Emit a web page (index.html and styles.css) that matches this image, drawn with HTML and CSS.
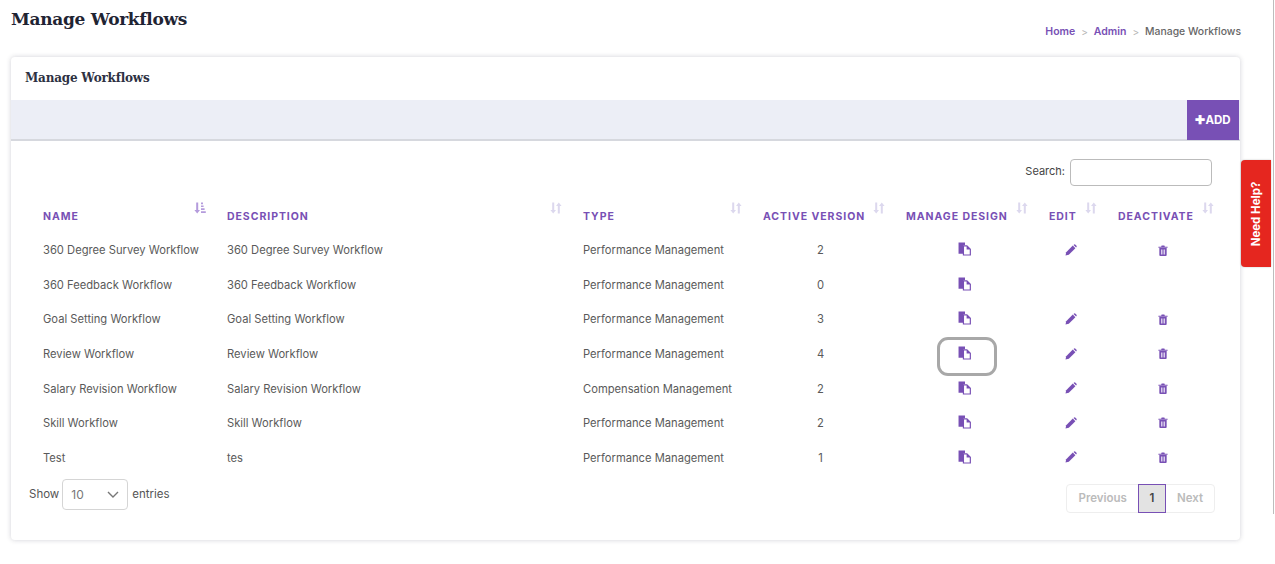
FILE: index.html
```html
<!DOCTYPE html>
<html lang="en">
<head>
<meta charset="utf-8">
<title>Manage Workflows</title>
<link rel="stylesheet" href="styles.css">
</head>
<body>
<svg class="defs" width="0" height="0" aria-hidden="true">
  <defs>
    <symbol id="i-copy" viewBox="0 0 13 13">
      <path d="M0.5 0.5H6.5V3H5V11H0.5Z" fill="#7850b5"/>
      <path d="M4.5 3H8.5L12 6.5V12.5H4.5Z" fill="#7850b5"/>
      <path d="M5.6 4.1H8V7H10.9V11.5H5.6Z" fill="#fff"/>
    </symbol>
    <symbol id="i-edit" viewBox="0 0 12 12">
      <path d="M0.5 11.5L1.2 8.2L7.8 1.6L10.4 4.2L3.8 10.8Z" fill="#7850b5"/>
      <path d="M8.5 0.9L9.2 0.4Q9.7 0.1 10.2 0.5L11.5 1.8Q11.9 2.3 11.6 2.8L11.1 3.5Z" fill="#7850b5"/>
    </symbol>
    <symbol id="i-trash" viewBox="0 0 10 12">
      <path d="M0 1.8H3L3.5 0.5H6.5L7 1.8H10V3H0Z" fill="#7850b5"/>
      <path d="M1 3.4H9V11Q9 12 8 12H2Q1 12 1 11Z" fill="#7850b5"/>
      <path d="M2.8 5H3.8V10.4H2.8ZM4.5 5H5.5V10.4H4.5ZM6.2 5H7.2V10.4H6.2Z" fill="#e4dcf2"/>
    </symbol>
    <symbol id="i-sort" viewBox="0 0 12 12">
      <path d="M2.2 0.5H4.2V8H6L3.2 11.5L0.4 8H2.2Z" fill="#dcd8ee"/>
      <path d="M7.8 11.5H9.8V4H11.6L8.8 0.5L6 4H7.8Z" fill="#dcd8ee"/>
    </symbol>
    <symbol id="i-sort-asc" viewBox="0 0 12 12">
      <path d="M2.2 0.5H4.2V8H6L3.2 11.5L0.4 8H2.2Z" fill="#b49bdc"/>
      <path d="M7 0.5H9V2.2H7ZM7 3.4H9.6V5.1H7ZM7 6.3H10.6V8H7ZM7 9.2H11.8V11H7Z" fill="#b49bdc"/>
    </symbol>
  </defs>
</svg>

<div class="page">
  <header class="page-head">
    <h1 class="page-title">Manage Workflows</h1>
    <nav class="crumbs">
      <a class="crumb-link">Home</a><span class="crumb-sep">&gt;</span>
      <a class="crumb-link">Admin</a><span class="crumb-sep">&gt;</span>
      <span class="crumb-current">Manage Workflows</span>
    </nav>
  </header>

  <section class="card">
    <h2 class="card-title">Manage Workflows</h2>
    <div class="toolbar">
      <button class="add-btn" type="button"><span class="add-plus">✚</span>ADD</button>
    </div>
    <div class="card-body">
      <div class="search-row">
        <label class="search-label" for="s">Search:</label>
        <input class="search-input" id="s" type="text">
      </div>
      <table class="grid">
        <colgroup>
          <col class="c1"><col class="c2"><col class="c3"><col class="c4"><col class="c5"><col class="c6"><col class="c7">
        </colgroup>
        <thead>
          <tr>
            <th>NAME<svg class="sort"><use href="#i-sort-asc"/></svg></th>
            <th>DESCRIPTION<svg class="sort"><use href="#i-sort"/></svg></th>
            <th>TYPE<svg class="sort"><use href="#i-sort"/></svg></th>
            <th>ACTIVE VERSION<svg class="sort"><use href="#i-sort"/></svg></th>
            <th>MANAGE DESIGN<svg class="sort"><use href="#i-sort"/></svg></th>
            <th>EDIT<svg class="sort"><use href="#i-sort"/></svg></th>
            <th>DEACTIVATE<svg class="sort"><use href="#i-sort"/></svg></th>
          </tr>
        </thead>
        <tbody>
          <tr><td>360 Degree Survey Workflow</td><td>360 Degree Survey Workflow</td><td>Performance Management</td><td class="mid">2</td><td class="mid"><svg class="ic-copy"><use href="#i-copy"/></svg></td><td class="mid"><svg class="ic-edit"><use href="#i-edit"/></svg></td><td class="mid"><svg class="ic-trash"><use href="#i-trash"/></svg></td></tr>
          <tr><td>360 Feedback Workflow</td><td>360 Feedback Workflow</td><td>Performance Management</td><td class="mid">0</td><td class="mid"><svg class="ic-copy"><use href="#i-copy"/></svg></td><td class="mid"></td><td class="mid"></td></tr>
          <tr><td>Goal Setting Workflow</td><td>Goal Setting Workflow</td><td>Performance Management</td><td class="mid">3</td><td class="mid"><svg class="ic-copy"><use href="#i-copy"/></svg></td><td class="mid"><svg class="ic-edit"><use href="#i-edit"/></svg></td><td class="mid"><svg class="ic-trash"><use href="#i-trash"/></svg></td></tr>
          <tr><td>Review Workflow</td><td>Review Workflow</td><td>Performance Management</td><td class="mid">4</td><td class="mid design-cell"><span class="ring"></span><svg class="ic-copy"><use href="#i-copy"/></svg></td><td class="mid"><svg class="ic-edit"><use href="#i-edit"/></svg></td><td class="mid"><svg class="ic-trash"><use href="#i-trash"/></svg></td></tr>
          <tr><td>Salary Revision Workflow</td><td>Salary Revision Workflow</td><td>Compensation Management</td><td class="mid">2</td><td class="mid"><svg class="ic-copy"><use href="#i-copy"/></svg></td><td class="mid"><svg class="ic-edit"><use href="#i-edit"/></svg></td><td class="mid"><svg class="ic-trash"><use href="#i-trash"/></svg></td></tr>
          <tr><td>Skill Workflow</td><td>Skill Workflow</td><td>Performance Management</td><td class="mid">2</td><td class="mid"><svg class="ic-copy"><use href="#i-copy"/></svg></td><td class="mid"><svg class="ic-edit"><use href="#i-edit"/></svg></td><td class="mid"><svg class="ic-trash"><use href="#i-trash"/></svg></td></tr>
          <tr><td>Test</td><td>tes</td><td>Performance Management</td><td class="mid">1</td><td class="mid"><svg class="ic-copy"><use href="#i-copy"/></svg></td><td class="mid"><svg class="ic-edit"><use href="#i-edit"/></svg></td><td class="mid"><svg class="ic-trash"><use href="#i-trash"/></svg></td></tr>
        </tbody>
      </table>
      <div class="table-foot">
        <div class="length">
          <span>Show</span>
          <span class="select"><span>10</span><svg class="chev" viewBox="0 0 12 7"><path d="M1 1L6 6L11 1" fill="none" stroke="#777" stroke-width="1.4"/></svg></span>
          <span>entries</span>
        </div>
        <div class="pager">
          <span class="pg">Previous</span><span class="pg pg-on">1</span><span class="pg">Next</span>
        </div>
      </div>
    </div>
  </section>
</div>

<aside class="help"><span class="help-text">Need Help?</span></aside>
<div class="edge"></div>
</body>
</html>
```

FILE: styles.css
```css
* { box-sizing: border-box; }
html, body { margin: 0; height: 564px; overflow: hidden; background: #fff; }
body { font-family: Inter, "Noto Sans", sans-serif; color: #555; font-size: 11px; position: relative; }
.defs { position: absolute; }

.page { width: 1241px; padding-left: 11px; }
.page-head { display: flex; justify-content: space-between; height: 57px; }
.page-title { margin: 9px 0 0; font-family: "DejaVu Serif", serif; font-size: 17px; line-height: 21px; font-weight: 700; color: #1f2433; letter-spacing: -0.3px; }
.crumbs { margin-top: 25px; display: flex; align-items: center; font-size: 10.5px; line-height: 14px; height: 14px; }
.crumb-link { color: #7850b5; font-weight: 600; }
.crumb-sep { color: #b5b5b5; margin: 0 6px; font-size: 10px; }
.crumb-current { color: #666; font-weight: 500; font-size: 10.4px; }

.card { width: 1229px; height: 483px; background: #fff; border-radius: 4px; box-shadow: 0 0 5px rgba(40, 40, 70, .22); }
.card-title { margin: 0; height: 43px; padding: 13px 14px 0; font-family: "DejaVu Serif", serif; font-size: 12px; line-height: 17px; font-weight: 700; color: #2d3142; letter-spacing: -0.2px; }
.toolbar { height: 41px; background: #eceef6; border-bottom: 2px solid #d6d8de; display: flex; justify-content: flex-end; padding-right: 1px; }
.add-btn { width: 52px; height: 40px; border: 0; padding: 0; background: #7850b5; color: #fff; font: 700 11.5px Inter, sans-serif; display: flex; align-items: center; justify-content: center; }
.add-plus { font-size: 11.5px; }

.card-body { padding: 18px 25px 0 20px; }
.search-row { display: flex; justify-content: flex-end; gap: 5px; padding-right: 3px; height: 27px; }
.search-label { font-size: 11px; line-height: 24px; color: #444; }
.search-input { width: 142px; height: 27px; border: 1px solid #bbb; border-radius: 4px; background: #fff; }

.grid { width: 1184px; table-layout: fixed; border-collapse: collapse; margin-top: 13px; }
.c1 { width: 184px; } .c2 { width: 356px; } .c3 { width: 180px; } .c4 { width: 143px; }
.c5 { width: 143px; } .c6 { width: 69px; } .c7 { width: 109px; }
.grid th { position: relative; height: 34px; padding: 11px 0 0 12px; text-align: left; font-size: 10.5px; line-height: 14px; font-weight: 700; letter-spacing: 0.95px; color: #7850b5; white-space: nowrap; vertical-align: top; }
.sort { position: absolute; right: 9px; top: 3px; width: 12px; height: 12px; }
.grid th:last-child .sort { right: 1px; }
.grid td { height: 34.6px; padding: 0 0 0 12px; font-size: 11.2px; line-height: 14px; color: #5a5a5a; white-space: nowrap; vertical-align: middle; }
.grid td.mid { padding: 0 4px 0 0; text-align: center; }
.grid td.mid svg { vertical-align: middle; margin-bottom: 2px; }
.ic-copy { width: 14px; height: 14px; margin-left: 2px; }
.ic-edit { width: 12px; height: 12px; margin-left: 2px; }
.ic-trash { width: 10px; height: 11px; margin-left: 8px; }
.design-cell { position: relative; }
.ring { position: absolute; left: 43px; top: 0; width: 60px; height: 39px; border: 3px solid #a8a8a8; border-radius: 11px; }

.table-foot { display: flex; justify-content: space-between; align-items: flex-start; margin-top: 4px; }
.length { display: flex; align-items: center; gap: 3px; margin-left: -2px; color: #555; font-size: 11.5px; height: 30px; }
.select { width: 66px; height: 31px; margin-right: 1px; border: 1px solid #d5d5d5; border-radius: 4px; display: flex; align-items: center; justify-content: space-between; padding: 0 8px; color: #777; font-size: 12px; }
.chev { width: 12px; height: 7px; }
.pager { display: flex; height: 29px; margin: 5px 0 0; border: 1px solid #eee; border-radius: 4px; }
.pg { padding: 0 11px; line-height: 27px; font-weight: 600; color: #bbb; font-size: 11.5px; }
.pg-on { background: #e3e3e3; color: #444; border: 1px solid #7850b5; height: 29px; margin-top: -1px; width: 28px; padding: 0; text-align: center; }

.help { position: absolute; left: 1241px; top: 160px; width: 30px; height: 107px; background: #e5261f; border-radius: 4px 0 0 4px; display: flex; align-items: center; justify-content: center; box-shadow: 0 0 2px rgba(0,0,0,.25); }
.help-text { transform: rotate(-90deg); white-space: nowrap; color: #fff; font-weight: 700; font-size: 11.5px; }
.edge { position: absolute; left: 1273px; top: 0; width: 1px; height: 514px; background: #bdbdbd; }
```
